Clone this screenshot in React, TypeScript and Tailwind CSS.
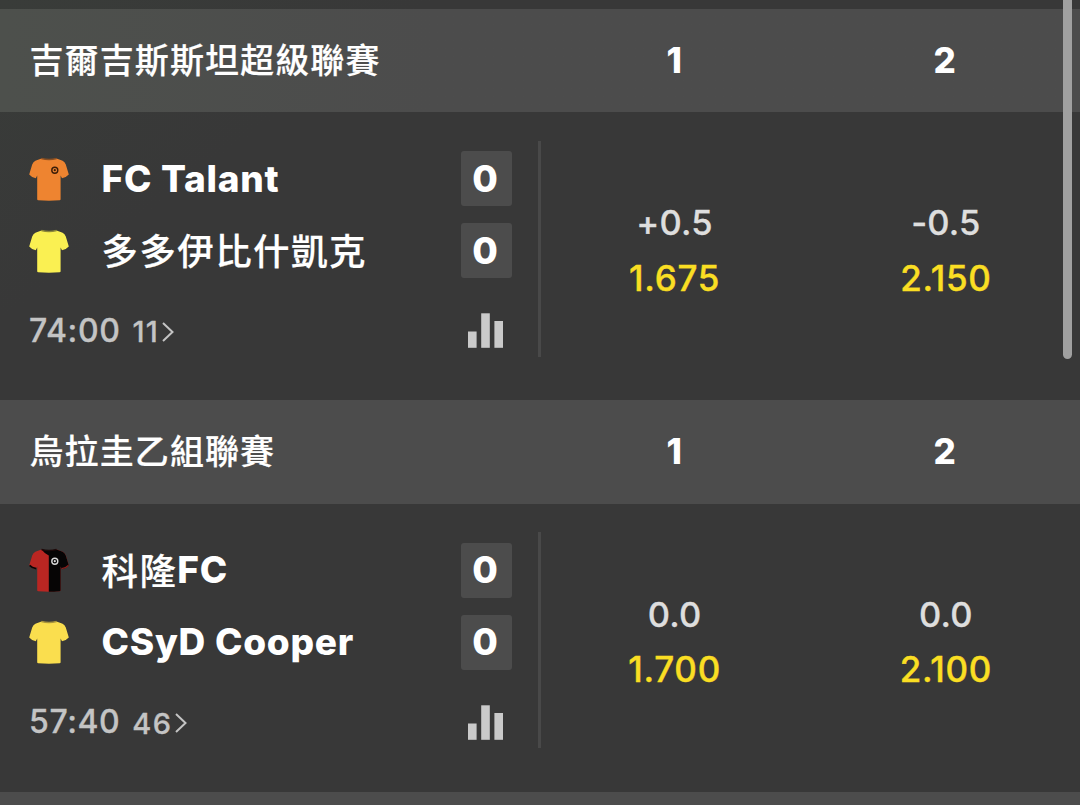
import clsx from "clsx";

type Kit = "orange" | "lemon" | "redBlack" | "gold";

type Team = {
  cjk?: string;
  latin?: string;
  kit: Kit;
  score: number;
};

type Match = {
  league: string;
  teams: Team[];
  clock: string;
  markets: string;
  odds: { line: string; price: string }[];
};

const matches: Match[] = [
  {
    league: "吉爾吉斯斯坦超級聯賽",
    teams: [
      { latin: "FC Talant", kit: "orange", score: 0 },
      { cjk: "多多伊比什凱克", kit: "lemon", score: 0 },
    ],
    clock: "74:00",
    markets: "11",
    odds: [
      { line: "+0.5", price: "1.675" },
      { line: "-0.5", price: "2.150" },
    ],
  },
  {
    league: "烏拉圭乙組聯賽",
    teams: [
      { cjk: "科隆", latin: "FC", kit: "redBlack", score: 0 },
      { latin: "CSyD Cooper", kit: "gold", score: 0 },
    ],
    clock: "57:40",
    markets: "46",
    odds: [
      { line: "0.0", price: "1.700" },
      { line: "0.0", price: "2.100" },
    ],
  },
];

const kits: Record<Kit, { left: string; right: string; trim: string; badge?: string }> = {
  orange: { left: "#ee8430", right: "#ee8430", trim: "#8a4f22", badge: "#3b1d08" },
  lemon: { left: "#faf052", right: "#faf052", trim: "#8c8738" },
  redBlack: { left: "#b92622", right: "#060505", trim: "#1b0a0a", badge: "#d8d8d8" },
  gold: { left: "#fade4e", right: "#fade4e", trim: "#a8943c" },
};

const SHIRT =
  "M12.5 1.5 Q20 3.6 27.5 1.5 L33.6 3.8 Q35.8 4.8 36.8 7.6 L39.8 17.6 Q37 20.8 33 21.2 L31.6 18.6 L31.6 42.3 Q31.6 43.2 30.6 43.3 Q20 44.2 9.2 43.3 Q8.2 43.2 8.2 42.3 L8.2 18.6 L6.8 21.2 Q2.8 20.8 0.2 17.6 L3.2 7.6 Q4.2 4.8 6.4 3.8 Z";

function Shirt({ kit }: { kit: Kit }) {
  const { left, right, trim, badge } = kits[kit];
  return (
    <svg aria-hidden="true" className="h-11 w-10 shrink-0" viewBox="0 0 40 44">
      <path d={SHIRT} fill={left} />
      {left !== right && (
        <>
          <path
            d="M12.5 1.5 Q20 3.6 27.5 1.5 L33.6 3.8 Q35.8 4.8 36.8 7.6 L39.8 17.6 Q37 20.8 33 21.2 L31.6 18.6 L31.6 42.3 Q31.6 43.2 30.6 43.3 Q25 43.8 19.8 43.8 L19.8 7.5 Q15.5 5.5 12.5 1.5 Z"
            fill={right}
          />
          <path d="M0.6 17.4 Q3 20 7.2 20.6" fill="none" stroke={right} strokeWidth="1.6" />
          <path d="M32.8 20.6 Q37 20 39.4 17.4" fill="none" stroke="#8c1f1c" strokeWidth="1.4" />
        </>
      )}
      <path d="M12.5 1.5 Q20 3.6 27.5 1.5" fill="none" stroke={trim} strokeWidth="1.6" />
      {badge && (
        <>
          <circle cx="25.8" cy="13.2" r="3" fill="none" stroke={badge} strokeWidth="1.4" />
          <circle cx="25.8" cy="13.2" r="1.1" fill={badge} />
        </>
      )}
    </svg>
  );
}

function StatsIcon() {
  return (
    <svg aria-hidden="true" className="h-[35px] w-[35px]" viewBox="0 0 35 35" fill="#cacaca">
      <rect x="0" y="18.5" width="8.6" height="16.3" />
      <rect x="13.2" y="0.3" width="8.6" height="34.5" />
      <rect x="26.4" y="8" width="8.6" height="26.8" />
    </svg>
  );
}

function LeagueHeader({ title, first }: { title: string; first: boolean }) {
  return (
    <div
      className={clsx(
        "flex h-[103.5px] items-center text-white",
        first ? "bg-linear-to-r from-[#4d504c] to-[#4c4c4c] to-40%" : "bg-[#4c4c4c]"
      )}
    >
      <h2 className="w-[539px] pb-[3px] pl-[29.5px] font-['Noto_Sans_CJK_TC',sans-serif] text-[34px] leading-none font-medium tracking-[1.1px] [-webkit-text-stroke:0.2px_white]">
        {title}
      </h2>
      <span className="flex-1 text-center text-[35px] leading-none font-extrabold">1</span>
      <span className="flex-1 text-center text-[35px] leading-none font-extrabold">2</span>
    </div>
  );
}

function TeamRow({ team }: { team: Team }) {
  return (
    <div className="flex h-[72px] items-center">
      <Shirt kit={team.kit} />
      <div className="flex flex-1 items-center pb-px pl-[32.5px] leading-none text-white">
        {team.cjk && (
          <span className="font-['Noto_Sans_CJK_TC',sans-serif] text-[36.5px] font-medium tracking-[1.4px] [-webkit-text-stroke:0.2px_white]">
            {team.cjk}
          </span>
        )}
        {team.latin && (
          <span className="text-[37px] font-extrabold tracking-[0.75px]">{team.latin}</span>
        )}
      </div>
      <span className="flex h-[55px] w-[51px] items-center justify-center rounded-[3px] bg-[#4c4c4c] pr-0.5 pb-px text-[37px] leading-none font-extrabold text-white">
        {team.score}
      </span>
    </div>
  );
}

function MatchCard({ match, first }: { match: Match; first: boolean }) {
  return (
    <section>
      <LeagueHeader title={match.league} first={first} />
      <div className="flex h-72">
        <div className="flex w-[511.5px] flex-col pt-[30.9px] pl-[29px]">
          {match.teams.map((team) => (
            <TeamRow key={team.kit} team={team} />
          ))}
          <div className="flex h-[88px] items-center justify-between pr-[9px] text-[#c4c4c4]">
            <div className="flex items-center leading-none font-medium [-webkit-text-stroke:0.3px_#c4c4c4]">
              <span className="text-[32px] tracking-[0.6px]">{match.clock}</span>
              <span className="pt-0.5 pl-3 text-[29px] tracking-[1.4px]">{match.markets}</span>
              <svg aria-hidden="true" className="mt-0.5 ml-[3px] h-5 w-3" viewBox="0 0 12 20" fill="none">
                <path d="M1 1 L10.5 10 L1 19" stroke="currentColor" strokeWidth="2" />
              </svg>
            </div>
            <StatsIcon />
          </div>
        </div>
        <div className="mt-[28.5px] ml-[26px] h-[216px] w-[3px] bg-[#494949]" />
        <div className="flex flex-1 pt-[84px]">
          {match.odds.map((odd) => (
            <div key={odd.price} className="flex flex-1 flex-col items-center pr-[3px] font-medium last:pr-0">
              <span className="text-[34.5px] leading-[54.5px] tracking-[0.2px] text-[#dedede] [-webkit-text-stroke:0.3px_#dedede]">
                {odd.line}
              </span>
              <span className="text-[35px] leading-[54.5px] tracking-[0.7px] text-[#fade23] [-webkit-text-stroke:0.4px_#fade23]">
                {odd.price}
              </span>
            </div>
          ))}
        </div>
      </div>
    </section>
  );
}

export default function App() {
  return (
    <main className="relative h-[805px] w-[1080px] overflow-hidden bg-[#383838] bg-linear-to-br from-[#393c39] to-[#383838] to-20% pt-[8.5px] font-['Inter',sans-serif]">
      {matches.map((match, i) => (
        <MatchCard key={match.league} match={match} first={i === 0} />
      ))}
      <div className="h-4 bg-[#4c4c4c]" />
      {/* Scroll thumb */}
      <div className="absolute -top-3 right-2 h-[371px] w-[9px] rounded-full bg-[#a0a0a0]" />
    </main>
  );
}
